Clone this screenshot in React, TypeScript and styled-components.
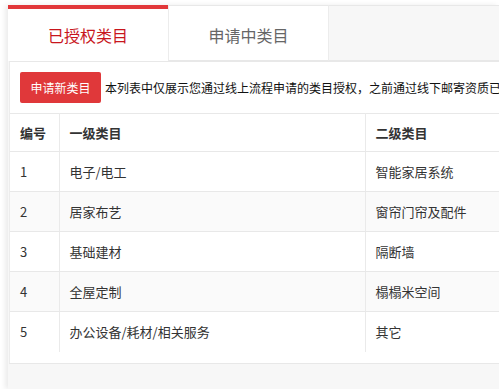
import React from "react";
import styled, { createGlobalStyle } from "styled-components";

const Global = createGlobalStyle`
  html, body { margin: 0; padding: 0; background: #fff; overflow: hidden; }
  body { font-family: "Microsoft YaHei", "Noto Sans CJK SC", "Noto Sans", sans-serif; color: #333; }
  * { box-sizing: border-box; }
`;

const Page = styled.div`
  padding: 5px 0 0 8px;
  height: 389px;
  width: 499px;
  overflow: hidden;
`;

const Shell = styled.div`
  display: flex;
  flex-direction: column;
  height: 384px;
  box-shadow: -3px 0 5px rgba(0, 0, 0, 0.08);
  background: #f7f7f7;
`;

const TabBar = styled.div`
  display: flex;
  height: 56px;
  flex: none;
`;

const Tab = styled.div<{ $active?: boolean }>`
  width: ${(p) => (p.$active ? 160 : 161)}px;
  display: flex;
  align-items: center;
  justify-content: center;
  font-size: 16px;
  background: #fff;
  color: ${(p) => (p.$active ? "#c8161d" : "#666")};
  border-top: ${(p) => (p.$active ? "4px solid #e2383a" : "1px solid #e8e8e8")};
  border-left: ${(p) => (p.$active ? "none" : "1px solid #ececec")};
  border-right: ${(p) => (p.$active ? "none" : "1px solid #ececec")};
  border-bottom: ${(p) => (p.$active ? "none" : "1px solid #e8e8e8")};
  padding-top: ${(p) => (p.$active ? 0 : 3)}px;
`;

const TabFill = styled.div`
  flex: 1;
  background: #f7f7f7;
  border-top: 1px solid #e8e8e8;
  border-bottom: 1px solid #e8e8e8;
`;

const Panel = styled.div`
  flex: none;
  margin-left: 1px;
  background: #fff;
  border-top: 1px solid #e8e8e8;
  border-left: 1px solid #ececec;
  padding-bottom: 11px;
  overflow: hidden;
`;

const Toolbar = styled.div`
  display: flex;
  align-items: center;
  gap: 4px;
  padding: 10px 0 10px 10px;
  white-space: nowrap;
  overflow: hidden;
`;

const PrimaryButton = styled.button`
  flex: none;
  height: 31px;
  width: 81px;
  border: none;
  border-radius: 2px;
  background: #e0383a;
  color: #fff;
  font-family: inherit;
  font-size: 12px;
  padding: 0;
  cursor: pointer;
`;

const Note = styled.span`
  font-size: 12px;
  color: #111;
  white-space: nowrap;
`;

const Table = styled.table`
  border-collapse: collapse;
  table-layout: fixed;
  width: 800px;
  font-size: 13px;
  border-top: 1px solid #e8e8e8;
`;

const Th = styled.th<{ $w?: number }>`
  ${(p) => (p.$w ? `width: ${p.$w}px;` : "")}
  height: 38px;
  padding: 0 10px;
  text-align: left;
  font-weight: 600;
  color: #333;
  border-right: 1px solid #eaeaea;
  border-bottom: 1px solid #e8e8e8;
`;

const Tr = styled.tr<{ $striped?: boolean; $last?: boolean }>`
  background: ${(p) => (p.$striped ? "#fafafa" : "#fff")};
  td { border-bottom: ${(p) => (p.$last ? "none" : "1px solid #e8e8e8")}; }
`;

const Td = styled.td`
  height: 40px;
  padding: 0 10px;
  color: #333;
  border-right: 1px solid #eaeaea;
  white-space: nowrap;
  overflow: hidden;
`;

const Footer = styled.div`
  flex: 1;
  background: #f7f7f7;
  border-top: 1px solid #e8e8e8;
  margin-left: 1px;
`;

const rows = [
  ["1", "电子/电工", "智能家居系统"],
  ["2", "居家布艺", "窗帘门帘及配件"],
  ["3", "基础建材", "隔断墙"],
  ["4", "全屋定制", "榻榻米空间"],
  ["5", "办公设备/耗材/相关服务", "其它"],
];

export default function App() {
  return (
    <>
      <Global />
      <Page>
        <Shell>
          <TabBar>
            <Tab $active>已授权类目</Tab>
            <Tab>申请中类目</Tab>
            <TabFill />
          </TabBar>
          <Panel>
            <Toolbar>
              <PrimaryButton>申请新类目</PrimaryButton>
              <Note>本列表中仅展示您通过线上流程申请的类目授权，之前通过线下邮寄资质已获得的类目授权请联系客服查询</Note>
            </Toolbar>
            <Table>
              <thead>
                <tr>
                  <Th $w={49}>编号</Th>
                  <Th $w={306}>一级类目</Th>
                  <Th $w={220}>二级类目</Th>
                  <Th />
                </tr>
              </thead>
              <tbody>
                {rows.map((r, i) => (
                  <Tr key={r[0]} $striped={i % 2 === 1} $last={i === rows.length - 1}>
                    <Td>{r[0]}</Td>
                    <Td>{r[1]}</Td>
                    <Td>{r[2]}</Td>
                    <Td />
                  </Tr>
                ))}
              </tbody>
            </Table>
          </Panel>
          <Footer />
        </Shell>
      </Page>
    </>
  );
}
